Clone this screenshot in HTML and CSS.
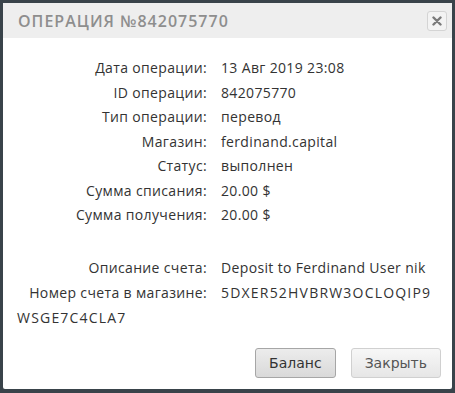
FILE: index.html
```html
<!DOCTYPE html>
<html lang="ru">
<head>
  <meta charset="UTF-8">
  <title>Операция №842075770</title>
  <link rel="stylesheet" href="styles.css">
</head>
<body>

  <div class="dialog">
    <div class="dialog-head">
      <span class="dialog-title">Операция №842075770</span>
      <button class="close-btn" title="Закрыть">
        <svg width="10" height="10" viewBox="0 0 10 10">
          <path d="M1.5 1.5 L8.5 8.5 M8.5 1.5 L1.5 8.5" stroke="#7a7a7a" stroke-width="2.4" stroke-linecap="round"/>
        </svg>
      </button>
    </div>

    <div class="dialog-body">
      <div class="row"><span class="label">Дата операции:</span>13 Авг 2019 23:08</div>
      <div class="row"><span class="label">ID операции:</span>842075770</div>
      <div class="row"><span class="label">Тип операции:</span>перевод</div>
      <div class="row"><span class="label">Магазин:</span>ferdinand.capital</div>
      <div class="row"><span class="label">Статус:</span>выполнен</div>
      <div class="row"><span class="label">Сумма списания:</span>20.00 $</div>
      <div class="row"><span class="label">Сумма получения:</span>20.00 $</div>

      <div class="spacer"></div>

      <div class="row"><span class="label">Описание счета:</span>Deposit to Ferdinand User nik</div>
      <div class="row wrap"><span class="label">Номер счета в магазине:</span>5DXER52HVBRW3OCLOQIP9WSGE7C4CLA7</div>
    </div>

    <div class="dialog-foot">
      <button class="btn btn-main">Баланс</button>
      <button class="btn">Закрыть</button>
    </div>
  </div>

</body>
</html>
```

FILE: styles.css
```css
body {
  margin: 0;
  background: #39434a;
  font-family: "Open Sans", Arial, sans-serif;
}
.dialog {
  margin: 3px;
  height: 386px;
  background: #fff;
  border-radius: 2px;
  display: flex;
  flex-direction: column;
}
.dialog-head {
  height: 35px;
  background: #eeeeee;
  display: flex;
  align-items: center;
  justify-content: space-between;
  padding: 0 5px 0 15px;
}
.dialog-title {
  font-size: 16px;
  font-weight: 600;
  letter-spacing: 1px;
  text-transform: uppercase;
  color: #8e8e8e;
}
.close-btn {
  width: 20px;
  height: 20px;
  padding: 0;
  border: 1px solid #d4d4d4;
  border-radius: 3px;
  background: #f3f3f3;
  display: flex;
  align-items: center;
  justify-content: center;
}
.dialog-body {
  padding: 18px 14px 0 14px;
  font-size: 14px;
  line-height: 24.5px;
  letter-spacing: 0.35px;
  color: #333;
}
.label {
  display: inline-block;
  width: 190px;
  text-align: right;
  margin-right: 14px;
}
.wrap {
  word-break: break-all;
  line-height: 25px;
  letter-spacing: 1.2px;
}
.wrap .label {
  letter-spacing: 0.35px;
}
.spacer {
  height: 28px;
}
.dialog-foot {
  margin-top: auto;
  display: flex;
  justify-content: flex-end;
  gap: 15px;
  padding: 0 11px 11px 0;
}
.btn {
  height: 30px;
  padding: 0 13px;
  font-family: "DejaVu Sans", Verdana, sans-serif;
  font-size: 14px;
  color: #555;
  border: 1px solid #d0d0d0;
  border-radius: 3px;
  background: linear-gradient(#f7f7f7, #e6e6e6);
}
.btn-main {
  color: #333;
  border-color: #a6a6a6;
  background: linear-gradient(#ececec, #d9d9d9);
}
```
